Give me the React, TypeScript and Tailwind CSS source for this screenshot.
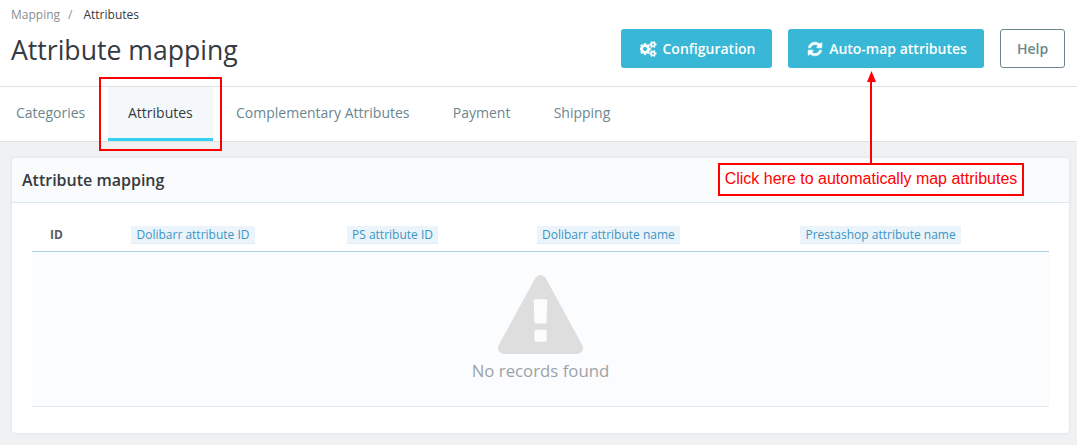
import React from 'react';

const tabs = ['Categories', 'Attributes', 'Complementary Attributes', 'Payment', 'Shipping'];

function CogsIcon({ className }: { className: string }) {
  return (
    <svg className={className} viewBox="0 0 2048 1792" fill="currentColor" stroke="currentColor" strokeWidth="50">
      <path d="M832 896q0-106-75-181t-181-75-181 75-75 181 75 181 181 75 181-75 75-181zm768 512q0-52-38-90t-90-38-90 38-38 90q0 53 37.5 90.5t90.5 37.5 90.5-37.5 37.5-90.5zm0-1024q0-52-38-90t-90-38-90 38-38 90q0 53 37.5 90.5t90.5 37.5 90.5-37.5 37.5-90.5zm-384 421v185q0 10-7 19.5t-16 10.5l-155 24q-11 35-32 76 34 48 90 115 7 11 7 20 0 12-7 19-23 30-82.5 89.5t-78.5 59.5q-11 0-21-7l-115-90q-37 19-77 31-11 108-23 155-7 24-30 24h-186q-11 0-20-7.5t-10-17.5l-23-153q-34-10-75-31l-118 89q-7 7-20 7-11 0-21-8-144-133-144-160 0-9 7-19 10-14 41-53t47-61q-23-44-35-82l-152-24q-10-1-17-9.5t-7-19.5v-185q0-10 7-19.5t16-10.5l155-24q11-35 32-76-34-48-90-115-7-11-7-20 0-12 7-20 22-30 82-89t79-59q11 0 21 7l115 90q34-18 77-32 11-108 23-154 7-24 30-24h186q11 0 20 7.5t10 17.5l23 153q34 10 75 31l118-89q8-7 20-7 11 0 21 8 144 133 144 160 0 8-7 19-12 16-42 54t-45 60q23 48 34 82l152 23q10 2 17 10.5t7 19.5zm640 533v140q0 16-149 31-12 27-30 52 51 113 51 138 0 4-4 7-122 71-124 71-8 0-46-47t-52-68q-20 2-30 2t-30-2q-14 21-52 68t-46 47q-2 0-124-71-4-3-4-7 0-25 51-138-18-25-30-52-149-15-149-31v-140q0-16 149-31 13-29 30-52-51-113-51-138 0-4 4-7 4-2 35-20t59-34 30-16q8 0 46 46.5t52 67.5q20-2 30-2t30 2q51-71 92-112l6-2q4 0 124 70 4 3 4 7 0 25-51 138 17 23 30 52 149 15 149 31zm0-1024v140q0 16-149 31-12 27-30 52 51 113 51 138 0 4-4 7-122 71-124 71-8 0-46-47t-52-68q-20 2-30 2t-30-2q-14 21-52 68t-46 47q-2 0-124-71-4-3-4-7 0-25 51-138-18-25-30-52-149-15-149-31v-140q0-16 149-31 13-29 30-52-51-113-51-138 0-4 4-7 4-2 35-20t59-34 30-16q8 0 46 46.5t52 67.5q20-2 30-2t30 2q51-71 92-112l6-2q4 0 124 70 4 3 4 7 0 25-51 138 17 23 30 52 149 15 149 31z" />
    </svg>
  );
}

function RefreshIcon({ className }: { className: string }) {
  return (
    <svg className={className} viewBox="0 0 1792 1792" fill="currentColor" stroke="currentColor" strokeWidth="70">
      <path d="M1639 1056q0 5-1 7-64 268-268 434.5t-478 166.5q-146 0-282.5-55t-243.5-157l-129 129q-19 19-45 19t-45-19-19-45v-448q0-26 19-45t45-19h448q26 0 45 19t19 45-19 45l-137 137q71 66 161 102t187 36q134 0 250-65t186-179q11-17 53-117 8-23 30-23h192q13 0 22.5 9.5t9.5 22.5zm25-800v448q0 26-19 45t-45 19h-448q-26 0-45-19t-19-45 19-45l138-138q-148-137-349-137-134 0-250 65t-186 179q-11 17-53 117-8 23-30 23h-199q-13 0-22.5-9.5t-9.5-22.5v-7q65-268 270-434.5t480-166.5q146 0 284 55.5t245 156.5l130-129q19-19 45-19t45 19 19 45z" />
    </svg>
  );
}

function WarningIcon({ className }: { className: string }) {
  return (
    <svg className={className} viewBox="0 0 1792 1664" fill="currentColor">
      <path d="M1024 1375v-190q0-14-9.5-23.5t-22.5-9.5h-192q-13 0-22.5 9.5t-9.5 23.5v190q0 14 9.5 23.5t22.5 9.5h192q13 0 22.5-9.5t9.5-23.5zm-2-374l18-459q0-12-10-19-13-11-24-11h-220q-11 0-24 11-10 7-10 21l17 457q0 10 10 16.5t24 6.5h185q14 0 23.5-6.5t10.5-16.5zm-14-934l768 1408q35 63-2 126-17 29-46.5 46t-63.5 17h-1536q-34 0-63.5-17t-46.5-46q-37-63-2-126l768-1408q17-31 47-49t65-18 65 18 47 49z" />
    </svg>
  );
}

function SortLabel({ label }: { label: string }) {
  return (
    <span className="block h-[18px] w-fit border-b border-[#dfeef6] bg-[#eaf4fa] px-[5.5px] text-[12px] leading-[17px] text-[#3c94c4]">
      {label}
    </span>
  );
}

export default function App() {
  return (
    <div className="relative h-[445px] w-[1077px] overflow-hidden bg-[#eff1f2] font-['Open_Sans',sans-serif]">
      <div className="flex h-[87px] items-start justify-between border-b border-[#dfe2e4] bg-white pl-[11px] pr-[12px]">
        <div>
          <div className="flex h-[30px] items-center text-[12px] text-[#363a41]">
            <span className="text-[#8a8f94]">Mapping</span>
            <span className="ml-[8px] mr-[11px] text-[#8a8f94]">/</span>
            <span>Attributes</span>
          </div>
          <h1 className="text-[26.6px] leading-[40px] font-normal text-[#363a41]">Attribute mapping</h1>
        </div>
        <div className="mt-[29px] flex gap-4">
          <button className="flex h-[39px] w-[151px] items-center justify-center gap-[5px] rounded-[3px] bg-[#38b7d6] pl-[2px] text-[14px] font-semibold text-white">
            <CogsIcon className="h-[16px] w-[18px]" />
            Configuration
          </button>
          <button className="flex h-[39px] w-[196px] items-center justify-center gap-[6px] rounded-[3px] bg-[#38b7d6] pl-[2px] text-[14px] font-semibold text-white">
            <RefreshIcon className="h-[16px] w-[16px]" />
            Auto-map attributes
          </button>
          <button className="h-[39px] w-[65px] rounded-[3px] border border-[#6c868e] bg-white text-[14px] font-semibold text-[#6c868e]">
            Help
          </button>
        </div>
      </div>

      <div className="flex h-[55px] gap-[3.25px] border-b border-[#dfe2e4] bg-white">
        {tabs.map((tab, i) => {
          const active = tab === 'Attributes';
          return (
            <div
              key={tab}
              className={
                active
                  ? 'flex h-[54px] items-center border-b-[3px] border-[#36d0f0] bg-[#f4f8fa] px-5 pb-[1px] text-[14px] text-[#363a41]'
                  : i === 0
                    ? 'flex h-[54px] items-center pb-[4px] pl-4 pr-[19.5px] text-[14px] text-[#6c868e]'
                    : 'flex h-[54px] items-center px-5 pb-[4px] text-[14px] text-[#6c868e]'
              }
            >
              {tab}
            </div>
          );
        })}
      </div>

      <div className="ml-[12px] mt-[16px] h-[275px] w-[1057px] rounded-[4px] bg-white shadow-[0_0_3px_rgba(0,0,0,0.1)]">
        <div className="flex h-[45px] items-center rounded-t-[4px] border-b border-[#dce7ec] bg-[#fafbfc] pl-[10px] text-[16px] font-semibold text-[#363a41]">
          Attribute mapping
        </div>
        <div className="ml-[20px] mt-[14px] h-[190px] w-[1017px] border-b border-[#e6e8ea]">
          <div className="flex h-[35px] items-start border-b border-[#a9cfe0] pt-[9px]">
            <span className="ml-[18px] w-[81px] text-[12px] leading-[17px] font-bold text-[#555a60]">ID</span>
            <div className="w-[215.5px]">
              <SortLabel label="Dolibarr attribute ID" />
            </div>
            <div className="w-[190px]">
              <SortLabel label="PS attribute ID" />
            </div>
            <div className="w-[263.5px]">
              <SortLabel label="Dolibarr attribute name" />
            </div>
            <SortLabel label="Prestashop attribute name" />
          </div>
          <div className="flex h-[154px] flex-col items-center bg-[#fbfcfe] pt-[23px]">
            <WarningIcon className="h-[79px] w-[85px] text-[#dedede]" />
            <span className="mt-[4px] text-[16.8px] text-[#9ba3a8]">No records found</span>
          </div>
        </div>
      </div>

      {/* annotations drawn over the screenshot */}
      <div className="absolute left-[99px] top-[77px] h-[74px] w-[123px] border-2 border-[#f00]" />
      <div className="absolute left-[718px] top-[163px] flex h-[33px] w-[306px] items-center justify-center border-2 border-[#f00] bg-white pb-[2px] font-['Liberation_Sans',sans-serif] text-[16px] text-[#f00]">
        Click here to automatically map attributes
      </div>
      <div className="absolute left-[870px] top-[80px] h-[83px] w-[2px] bg-[#f00]" />
      <svg className="absolute left-[867px] top-[71px]" width="9" height="11" viewBox="0 0 9 11">
        <path d="M4.5 0 L9 11 L0 11 Z" fill="#f00" />
      </svg>
    </div>
  );
}
